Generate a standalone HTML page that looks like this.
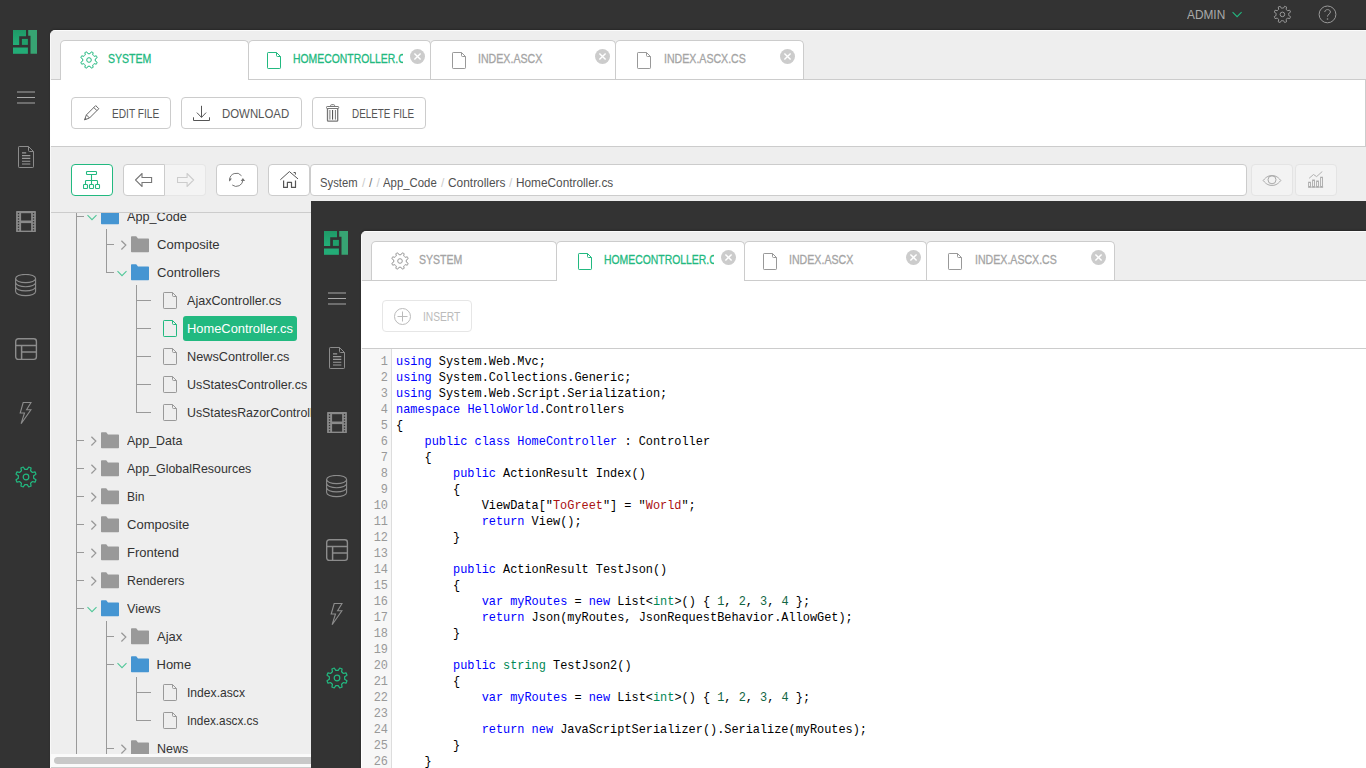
<!DOCTYPE html>
<html lang="en"><head><meta charset="utf-8"><title>CMS Console</title>
<style>
html,body{margin:0;padding:0}
body{width:1366px;height:768px;overflow:hidden;background:#333;position:relative;font-family:"Liberation Sans",sans-serif}
.app{position:absolute;overflow:hidden;background:#333}
.a{position:absolute;display:block}
.t{position:absolute;display:block;white-space:nowrap;transform-origin:0 50%}
.z3{z-index:3}
.tb{-webkit-text-stroke:.3px}
.dark{background:#333}
.btn{background:#fff;border:1px solid #ccc;border-radius:4px;box-sizing:border-box}
pre{margin:0}
.code,.ln{font-family:"Liberation Mono",monospace;font-size:11.9px;line-height:16px;color:#000;white-space:pre}
.ln{text-align:right;color:#999}
.ck{color:#00f}.cd{color:#00f}.cv{color:#000}.cs{color:#a11}.cy{color:#085}.cn{color:#164}
</style></head>
<body>
<div class="app" style="left:0;top:0;width:1366px;height:768px">
<div class="a dark" style="left:0px;top:0px;width:1366px;height:30px;"></div>
<div class="a dark" style="left:0px;top:30px;width:50px;height:800px;"></div>
<svg class="a" style="left:13px;top:30px" width="24" height="24" viewBox="0 0 24 24">
<defs><linearGradient id="lg1" x1="0" y1="0" x2="0" y2="1"><stop offset="0" stop-color="#1f9a67"/><stop offset="1" stop-color="#23ae78"/></linearGradient></defs>
<path d="M0 0H13V6.2H6.2V14.9H0Z" fill="url(#lg1)"/>
<rect x="8.9" y="8.9" width="6" height="6" fill="#209f6b"/>
<rect x="0" y="17.5" width="14.9" height="6.3" fill="#23ac77"/>
<path d="M15.2 0H24V23.8H17.5V5.8H15.2Z" fill="#37a473"/>
</svg>
<svg class="a" style="left:17px;top:91px" width="18" height="14" viewBox="0 0 18 14"><path d="M0 1H18M0 6.5H18M0 12H18" stroke="#a8a8a8" stroke-width="1" fill="none"/></svg>
<svg class="a" style="left:17px;top:145px" width="18" height="24" viewBox="0 0 18 24"><path d="M2.20 1.50H11.50L16.50 6.50V21.80Q16.50 22.50 15.80 22.50H2.20Q1.50 22.50 1.50 21.80V2.20Q1.50 1.50 2.20 1.50ZM11.50 1.50V5.50Q11.50 6.50 12.50 6.50H16.50" fill="none" stroke="#8c8c8c" stroke-width="1.0" stroke-linejoin="round"/></svg><svg class="a" style="left:22px;top:152px" width="9" height="13" viewBox="0 0 9 13"><path d="M0 .9H4.2M0 3.6H8.3M0 6.4H8.3M0 9.2H8.3M0 12H8.3" stroke="#9a9a9a" stroke-width="1.1"/></svg>
<svg class="a" style="left:16px;top:211px" width="20" height="21" viewBox="0 0 20 21"><rect x=".1" y="0" width="19.8" height="21" rx=".6" fill="#8a8a8a"/><g fill="#333"><rect x="5.1" y="2.2" width="10" height="7.3"/><rect x="5.1" y="12.1" width="10" height="7.5"/><rect x="1.85" y="1.90" width="1.3" height="1.3"/><rect x="16.85" y="1.90" width="1.3" height="1.3"/><rect x="1.85" y="4.63" width="1.3" height="1.3"/><rect x="16.85" y="4.63" width="1.3" height="1.3"/><rect x="1.85" y="7.36" width="1.3" height="1.3"/><rect x="16.85" y="7.36" width="1.3" height="1.3"/><rect x="1.85" y="10.09" width="1.3" height="1.3"/><rect x="16.85" y="10.09" width="1.3" height="1.3"/><rect x="1.85" y="12.82" width="1.3" height="1.3"/><rect x="16.85" y="12.82" width="1.3" height="1.3"/><rect x="1.85" y="15.55" width="1.3" height="1.3"/><rect x="16.85" y="15.55" width="1.3" height="1.3"/><rect x="1.85" y="18.28" width="1.3" height="1.3"/><rect x="16.85" y="18.28" width="1.3" height="1.3"/></g></svg>
<svg class="a" style="left:15px;top:274px" width="22" height="23" viewBox="0 0 22 23"><g fill="none" stroke="#8c8c8c" stroke-width="1.1"><ellipse cx="10.6" cy="4.5" rx="10" ry="4.1"/><path d="M.6 4.5V17.5C.6 19.8 5.1 21.6 10.6 21.6S20.6 19.8 20.6 17.5V4.5"/><path d="M.6 8.6C.6 10.9 5.1 12.7 10.6 12.7S20.6 10.9 20.6 8.6"/><path d="M.6 12.8C.6 15.1 5.1 16.9 10.6 16.9S20.6 15.1 20.6 12.8"/></g></svg>
<svg class="a" style="left:15px;top:338px" width="23" height="23" viewBox="0 0 23 23"><rect x=".7" y=".8" width="20.7" height="20.6" rx="2.6" fill="none" stroke="#8c8c8c" stroke-width="1.4"/><path d="M.7 7.6H21.4M6.6 7.6V21.4M6.6 13.9H21.4" fill="none" stroke="#8c8c8c" stroke-width="1.5"/></svg>
<svg class="a" style="left:19px;top:402px" width="14" height="23" viewBox="0 0 14 23"><path d="M4.2 .5H12L7.6 7.7H11.9L2.1 21.7L5.5 11H1.2Z" fill="none" stroke="#8c8c8c" stroke-width="1.1" stroke-linejoin="miter"/></svg>
<svg class="a" style="left:15px;top:466px" width="22" height="22" viewBox="0 0 22 22"><path d="M12.21 3.38L13.77 1.03A10.35 10.35 0 0 1 16.10 1.99L15.53 4.76A7.71 7.71 0 0 1 17.24 6.47L20.01 5.90A10.35 10.35 0 0 1 20.97 8.23L18.62 9.79A7.71 7.71 0 0 1 18.62 12.21L20.97 13.77A10.35 10.35 0 0 1 20.01 16.10L17.24 15.53A7.71 7.71 0 0 1 15.53 17.24L16.10 20.01A10.35 10.35 0 0 1 13.77 20.97L12.21 18.62A7.71 7.71 0 0 1 9.79 18.62L8.23 20.97A10.35 10.35 0 0 1 5.90 20.01L6.47 17.24A7.71 7.71 0 0 1 4.76 15.53L1.99 16.10A10.35 10.35 0 0 1 1.03 13.77L3.38 12.21A7.71 7.71 0 0 1 3.38 9.79L1.03 8.23A10.35 10.35 0 0 1 1.99 5.90L4.76 6.47A7.71 7.71 0 0 1 6.47 4.76L5.90 1.99A10.35 10.35 0 0 1 8.23 1.03L9.79 3.38A7.71 7.71 0 0 1 12.21 3.38Z" fill="none" stroke="#22b980" stroke-width="1.2" stroke-linejoin="round"/><circle cx="11.0" cy="11.0" r="2.82" fill="none" stroke="#22b980" stroke-width="1.2"/></svg>
<div class="a " style="left:50px;top:30px;width:1400px;height:800px;background:#eee;border-top-left-radius:5px;border-top:1px solid #fbfbfb;border-left:1px solid #f8f8f8;box-shadow:0 -1px 2px rgba(0,0,0,.22)"></div>
<div class="a " style="left:51px;top:79px;width:1400px;height:1px;background:#ccc"></div>
<div class="a " style="left:50px;top:80px;width:1400px;height:66px;background:#fff"></div>
<div class="a " style="left:51px;top:146px;width:1400px;height:1px;background:#ccc"></div>
<div class="a " style="left:1365px;top:79px;width:1px;height:67px;background:#ccc"></div>
<div class="a " style="left:60px;top:40px;width:189px;height:40px;background:#fff;border:1px solid #ccc;border-radius:5px 5px 0 0;box-sizing:border-box;border-bottom:none;z-index:2;"></div>
<div class="a " style="left:248px;top:40px;width:183px;height:39px;background:#fff;border:1px solid #ccc;border-radius:5px 5px 0 0;box-sizing:border-box;border-bottom:none;"></div>
<div class="a " style="left:430px;top:40px;width:186px;height:39px;background:#fff;border:1px solid #ccc;border-radius:5px 5px 0 0;box-sizing:border-box;border-bottom:none;"></div>
<div class="a " style="left:615px;top:40px;width:189px;height:39px;background:#fff;border:1px solid #ccc;border-radius:5px 5px 0 0;box-sizing:border-box;border-bottom:none;"></div>
<svg class="a z3" style="left:80px;top:51px" width="18" height="18" viewBox="0 0 18 18"><path d="M9.98 2.78L11.26 0.86A8.45 8.45 0 0 1 13.16 1.65L12.70 3.91A6.30 6.30 0 0 1 14.09 5.30L16.35 4.84A8.45 8.45 0 0 1 17.14 6.74L15.22 8.02A6.30 6.30 0 0 1 15.22 9.98L17.14 11.26A8.45 8.45 0 0 1 16.35 13.16L14.09 12.70A6.30 6.30 0 0 1 12.70 14.09L13.16 16.35A8.45 8.45 0 0 1 11.26 17.14L9.98 15.22A6.30 6.30 0 0 1 8.02 15.22L6.74 17.14A8.45 8.45 0 0 1 4.84 16.35L5.30 14.09A6.30 6.30 0 0 1 3.91 12.70L1.65 13.16A8.45 8.45 0 0 1 0.86 11.26L2.78 9.98A6.30 6.30 0 0 1 2.78 8.02L0.86 6.74A8.45 8.45 0 0 1 1.65 4.84L3.91 5.30A6.30 6.30 0 0 1 5.30 3.91L4.84 1.65A8.45 8.45 0 0 1 6.74 0.86L8.02 2.78A6.30 6.30 0 0 1 9.98 2.78Z" fill="none" stroke="#22b980" stroke-width="1.0" stroke-linejoin="round"/><circle cx="9.0" cy="9.0" r="2.30" fill="none" stroke="#22b980" stroke-width="1.0"/></svg>
<span id="t1" class="t z3 tb" style="left:108.4px;top:50.50px;font-size:13px;line-height:16px;color:#22b980;transform:scaleX(0.8094);">SYSTEM</span>
<svg class="a z3" style="left:266px;top:51px" width="16" height="19" viewBox="0 0 16 19"><path d="M2.20 1.50H10.50L14.50 5.50V16.80Q14.50 17.50 13.80 17.50H2.20Q1.50 17.50 1.50 16.80V2.20Q1.50 1.50 2.20 1.50ZM10.50 1.50V4.50Q10.50 5.50 11.50 5.50H14.50" fill="none" stroke="#22b980" stroke-width="1.0" stroke-linejoin="round"/></svg>
<div class="a z3" style="left:293px;top:45px;width:110px;height:28px;overflow:hidden"><span id="t2" class="t tb" style="left:0px;top:5.50px;font-size:13px;line-height:16px;color:#22b980;transform:scaleX(0.80);">HOMECONTROLLER.CS</span></div>
<svg class="a z3" style="left:410.0px;top:49.0px" width="15" height="15" viewBox="0 0 15 15"><circle cx="7.5" cy="7.5" r="7.5" fill="#ccc"/><path d="M4.4 4.4L10.6 10.6M10.6 4.4L4.4 10.6" stroke="#fff" stroke-width="1.45"/></svg>
<svg class="a z3" style="left:451px;top:51px" width="16" height="19" viewBox="0 0 16 19"><path d="M2.20 1.50H10.50L14.50 5.50V16.80Q14.50 17.50 13.80 17.50H2.20Q1.50 17.50 1.50 16.80V2.20Q1.50 1.50 2.20 1.50ZM10.50 1.50V4.50Q10.50 5.50 11.50 5.50H14.50" fill="none" stroke="#999" stroke-width="1.0" stroke-linejoin="round"/></svg>
<span id="t3" class="t z3 tb" style="left:478px;top:50.50px;font-size:13px;line-height:16px;color:#a4a4a4;transform:scaleX(0.8165);">INDEX.ASCX</span>
<svg class="a z3" style="left:595.0px;top:49.0px" width="15" height="15" viewBox="0 0 15 15"><circle cx="7.5" cy="7.5" r="7.5" fill="#ccc"/><path d="M4.4 4.4L10.6 10.6M10.6 4.4L4.4 10.6" stroke="#fff" stroke-width="1.45"/></svg>
<svg class="a z3" style="left:636px;top:51px" width="16" height="19" viewBox="0 0 16 19"><path d="M2.20 1.50H10.50L14.50 5.50V16.80Q14.50 17.50 13.80 17.50H2.20Q1.50 17.50 1.50 16.80V2.20Q1.50 1.50 2.20 1.50ZM10.50 1.50V4.50Q10.50 5.50 11.50 5.50H14.50" fill="none" stroke="#999" stroke-width="1.0" stroke-linejoin="round"/></svg>
<span id="t4" class="t z3 tb" style="left:663.5px;top:50.50px;font-size:13px;line-height:16px;color:#a4a4a4;transform:scaleX(0.8150);">INDEX.ASCX.CS</span>
<svg class="a z3" style="left:780.0px;top:49.0px" width="15" height="15" viewBox="0 0 15 15"><circle cx="7.5" cy="7.5" r="7.5" fill="#ccc"/><path d="M4.4 4.4L10.6 10.6M10.6 4.4L4.4 10.6" stroke="#fff" stroke-width="1.45"/></svg>
<span id="t5" class="t " style="left:1187.2px;top:6.50px;font-size:13px;line-height:16px;color:#aaa;transform:scaleX(0.9119);">ADMIN</span>
<svg class="a" style="left:1232px;top:11px" width="11" height="7" viewBox="0 0 11 7"><g transform="translate(0.1 0.8)"><path d="M.5 .4L5 4.9L9.5 .4" fill="none" stroke="#22b980" stroke-width="1.05"/></g></svg>
<svg class="a" style="left:1273px;top:5px" width="19" height="19" viewBox="0 0 19 19"><g transform="translate(0.4 0.4)"><path d="M9.98 2.78L11.26 0.86A8.45 8.45 0 0 1 13.16 1.65L12.70 3.91A6.30 6.30 0 0 1 14.09 5.30L16.35 4.84A8.45 8.45 0 0 1 17.14 6.74L15.22 8.02A6.30 6.30 0 0 1 15.22 9.98L17.14 11.26A8.45 8.45 0 0 1 16.35 13.16L14.09 12.70A6.30 6.30 0 0 1 12.70 14.09L13.16 16.35A8.45 8.45 0 0 1 11.26 17.14L9.98 15.22A6.30 6.30 0 0 1 8.02 15.22L6.74 17.14A8.45 8.45 0 0 1 4.84 16.35L5.30 14.09A6.30 6.30 0 0 1 3.91 12.70L1.65 13.16A8.45 8.45 0 0 1 0.86 11.26L2.78 9.98A6.30 6.30 0 0 1 2.78 8.02L0.86 6.74A8.45 8.45 0 0 1 1.65 4.84L3.91 5.30A6.30 6.30 0 0 1 5.30 3.91L4.84 1.65A8.45 8.45 0 0 1 6.74 0.86L8.02 2.78A6.30 6.30 0 0 1 9.98 2.78Z" fill="none" stroke="#999" stroke-width="1.0" stroke-linejoin="round"/><circle cx="9.0" cy="9.0" r="2.30" fill="none" stroke="#999" stroke-width="1.0"/></g></svg>
<svg class="a" style="left:1318px;top:5px" width="19" height="19" viewBox="0 0 19 19"><g transform="translate(0.5 0.4)"><circle cx="9" cy="9" r="8.4" fill="none" stroke="#999" stroke-width="1"/><path d="M6.3 6.6C6.3 3.4 11.9 3.4 11.9 6.6C11.9 8.8 9 8.6 9 11.2" fill="none" stroke="#999" stroke-width="1"/><circle cx="9" cy="13.6" r=".8" fill="#999"/></g></svg>
<div class="a btn" style="left:71px;top:97px;width:100px;height:32px;"></div>
<svg class="a" style="left:84px;top:105px" width="16" height="16" viewBox="0 0 16 16"><path d="M11.7 .6L14.8 3.7L5.5 13L.5 14.9L2.4 9.9ZM9.8 2.5L12.9 5.6M2.4 9.9L5.5 13" fill="none" stroke="#666" stroke-width="1" stroke-linejoin="round"/><path d="M.5 14.9L1.3 12.8L2.6 14.1Z" fill="#666"/></svg>
<span id="t6" class="t " style="left:111.6px;top:107.34px;font-size:12px;line-height:15px;color:#555;transform:scaleX(0.8464);">EDIT FILE</span>
<div class="a btn" style="left:181px;top:97px;width:121px;height:32px;"></div>
<svg class="a" style="left:193px;top:105px" width="17" height="16" viewBox="0 0 17 16"><path d="M8.5 .8V12.3M3.9 7.6L8.5 12.4L13.1 7.6M.5 12.3V15.5H16.5V12.3" fill="none" stroke="#555" stroke-width="1"/></svg>
<span id="t7" class="t " style="left:221.75px;top:107.34px;font-size:12px;line-height:15px;color:#555;transform:scaleX(0.9507);">DOWNLOAD</span>
<div class="a btn" style="left:312px;top:97px;width:114px;height:32px;"></div>
<svg class="a" style="left:326px;top:104px" width="14" height="18" viewBox="0 0 14 18"><path d="M4.6 2.4V1.6A.9 .9 0 0 1 5.5 .7H7.7A.9 .9 0 0 1 8.6 1.6V2.4" fill="none" stroke="#777" stroke-width="1"/><rect x=".5" y="2.5" width="12.2" height="2" rx=".7" fill="none" stroke="#777" stroke-width="1"/><path d="M1.5 4.6V16.4A.8 .8 0 0 0 2.3 17.2H10.9A.8 .8 0 0 0 11.7 16.4V4.6" fill="none" stroke="#777" stroke-width="1.3"/><path d="M3.9 6V15.6M9.4 6V15.6" stroke="#777" stroke-width="1"/><path d="M6.6 6V15.6" stroke="#444" stroke-width="1"/></svg>
<span id="t8" class="t " style="left:352px;top:107.34px;font-size:12px;line-height:15px;color:#555;transform:scaleX(0.8233);">DELETE FILE</span>
<div class="a btn" style="left:71px;top:164px;width:42px;height:32px;border-color:#22b980;"></div>
<svg class="a" style="left:83px;top:171px" width="18" height="19" viewBox="0 0 18 19"><g fill="none" stroke="#22b980" stroke-width="1.1"><rect x="3.5" y=".5" width="10" height="3" rx=".8"/><path d="M8.5 3.5V13.5M2.5 13.5V10.3A.8 .8 0 0 1 3.3 9.5H13.7A.8 .8 0 0 1 14.5 10.3V13.5"/><rect x=".5" y="13.5" width="4" height="4" rx=".8"/><rect x="6.5" y="13.5" width="4" height="4" rx=".8"/><rect x="12.5" y="13.5" width="4" height="4" rx=".8"/></g></svg>
<div class="a btn" style="left:123px;top:164px;width:42px;height:32px;border-radius:4px 0 0 4px;"></div>
<div class="a btn" style="left:165px;top:164px;width:41px;height:32px;border-radius:0 4px 4px 0;background:#f4f4f4;border-color:#e6e6e6;border-left:none;"></div>
<svg class="a" style="left:135px;top:173px" width="18" height="14" viewBox="0 0 18 14"><path d="M.5 7L7 .5V4.5H16.6V9.5H7V13.5Z" fill="none" stroke="#777" stroke-width="1.1" stroke-linejoin="miter"/></svg>
<svg class="a" style="left:177px;top:173px" width="18" height="14" viewBox="0 0 18 14"><path transform="translate(17.1 0) scale(-1 1)" d="M.5 7L7 .5V4.5H16.6V9.5H7V13.5Z" fill="none" stroke="#ccc" stroke-width="1.1" stroke-linejoin="miter"/></svg>
<div class="a btn" style="left:216px;top:164px;width:42px;height:32px;"></div>
<svg class="a" style="left:229px;top:172px" width="17" height="16" viewBox="0 0 17 16"><g transform="translate(0 0.5)"><path d="M0.70 7.30A6.6 6.6 0 0 1 12.50 3.24M13.90 7.30A6.6 6.6 0 0 1 3.24 12.50" fill="none" stroke="#777" stroke-width="1"/><path d="M-1.50 6.10L0.70 9.10L2.90 6.10ZM11.70 8.50L13.90 5.50L16.10 8.50Z" fill="#777"/></g></svg>
<div class="a btn" style="left:268px;top:164px;width:42px;height:32px;"></div>
<svg class="a" style="left:280px;top:171px" width="19" height="17" viewBox="0 0 19 17"><path d="M.3 8.8L9.4 .6L18 7.9" fill="none" stroke="#555" stroke-width="1"/><path d="M3.6 9.5V16.4H7.4V11.4H11.5V16.4H15.5V9.5" fill="none" stroke="#555" stroke-width="1.2" stroke-linejoin="round"/><path d="M13.6 1.5H15.4V3.6" fill="none" stroke="#555" stroke-width="1"/></svg>
<div class="a btn" style="left:310px;top:164px;width:937px;height:32px;"></div>
<span id="t9" class="t " style="left:320px;top:176.34px;font-size:12px;line-height:15px;color:#505050;transform:scaleX(0.9375);">System</span>
<span id="t10" class="t " style="left:362px;top:176.34px;font-size:12px;line-height:15px;color:#ccc;">/</span>
<span id="t11" class="t " style="left:369px;top:176.34px;font-size:12px;line-height:15px;color:#777;">/</span>
<span id="t12" class="t " style="left:376.5px;top:176.34px;font-size:12px;line-height:15px;color:#ccc;">/</span>
<span id="t13" class="t " style="left:383px;top:176.34px;font-size:12px;line-height:15px;color:#505050;transform:scaleX(0.9474);">App_Code</span>
<span id="t14" class="t " style="left:441px;top:176.34px;font-size:12px;line-height:15px;color:#ccc;">/</span>
<span id="t15" class="t " style="left:447.5px;top:176.34px;font-size:12px;line-height:15px;color:#505050;transform:scaleX(0.9914);">Controllers</span>
<span id="t16" class="t " style="left:509px;top:176.34px;font-size:12px;line-height:15px;color:#ccc;">/</span>
<span id="t17" class="t " style="left:515.5px;top:176.34px;font-size:12px;line-height:15px;color:#505050;transform:scaleX(0.9848);">HomeController.cs</span>
<div class="a btn" style="left:1251px;top:164px;width:42px;height:32px;background:#f3f3f3;border-color:#e4e4e4;"></div>
<svg class="a" style="left:1262px;top:175px" width="20" height="11" viewBox="0 0 20 11"><g transform="translate(0.5 0)"><path d="M.7 5.5C4 1.2 7 .6 9.5 .6S15 1.2 18.3 5.5C15 9.8 12 10.4 9.5 10.4S4 9.8 .7 5.5Z" fill="none" stroke="#aaa" stroke-width="1"/><circle cx="9.5" cy="4.8" r="4" fill="none" stroke="#aaa" stroke-width="1"/></g></svg>
<div class="a btn" style="left:1295px;top:164px;width:42px;height:32px;background:#f3f3f3;border-color:#e4e4e4;"></div>
<svg class="a" style="left:1308px;top:171px" width="16" height="17" viewBox="0 0 16 17"><g fill="none" stroke="#aaa" stroke-width=".9"><path d="M.2 16.1H15.2"/><rect x=".6" y="11.2" width="1.9" height="4.9"/><rect x="4.6" y="9.0" width="1.9" height="7.1"/><rect x="8.6" y="10.0" width="1.9" height="6.1"/><rect x="12.6" y="6.2" width="1.9" height="9.9"/><path d="M1.1 7.3L5.5 3.5L8.6 5.6L14.3 .5"/></g></svg>
<div class="a " style="left:51px;top:212px;width:260px;height:1px;background:#ccc"></div>
<div class="a" style="left:50px;top:213px;width:261px;height:541px;overflow:hidden">
<div class="a " style="left:26px;top:-13px;width:1px;height:568px;background:#999"></div>
<div class="a " style="left:56px;top:16px;width:1px;height:44px;background:#999"></div>
<div class="a " style="left:86px;top:72px;width:1px;height:128px;background:#999"></div>
<div class="a " style="left:56px;top:408px;width:1px;height:147px;background:#999"></div>
<div class="a " style="left:86px;top:464px;width:1px;height:44px;background:#999"></div>
<div class="a " style="left:26px;top:3px;width:8px;height:1px;background:#999"></div>
<svg class="a" style="left:37px;top:1px" width="10" height="7" viewBox="0 0 10 7"><g transform="translate(0 0.8)"><path d="M.5 .4L5 4.9L9.5 .4" fill="none" stroke="#4fc797" stroke-width="1.05"/></g></svg>
<svg class="a" style="left:51px;top:-5px" width="18" height="17" viewBox="0 0 18 17"><g transform="translate(0 0.2)"><path d="M0 .9A.8 .8 0 0 1 .8 .1H5.2L7 2.4H17.3A.7 .7 0 0 1 18 3.1V15.4A.7 .7 0 0 1 17.3 16.1H.7A.7 .7 0 0 1 0 15.4Z" fill="#4595d2"/></g></svg>
<span id="t18" class="t " style="left:76.7px;top:-4.50px;font-size:13px;line-height:16px;color:#333;transform:scaleX(0.9738);">App_Code</span>
<div class="a " style="left:56px;top:31px;width:8px;height:1px;background:#999"></div>
<svg class="a" style="left:70px;top:27px" width="7" height="11" viewBox="0 0 7 11"><g transform="translate(0.8 0.2)"><path d="M.6 .5L5 4.9L.6 9.3" fill="none" stroke="#999" stroke-width="1.3"/></g></svg>
<svg class="a" style="left:81px;top:23px" width="18" height="17" viewBox="0 0 18 17"><g transform="translate(0 0.2)"><path d="M0 .9A.8 .8 0 0 1 .8 .1H5.2L7 2.4H17.3A.7 .7 0 0 1 18 3.1V15.4A.7 .7 0 0 1 17.3 16.1H.7A.7 .7 0 0 1 0 15.4Z" fill="#999"/></g></svg>
<span id="t19" class="t " style="left:106.5px;top:23.50px;font-size:13px;line-height:16px;color:#333;transform:scaleX(1.0065);">Composite</span>
<div class="a " style="left:56px;top:59px;width:8px;height:1px;background:#999"></div>
<svg class="a" style="left:67px;top:57px" width="10" height="7" viewBox="0 0 10 7"><g transform="translate(0 0.8)"><path d="M.5 .4L5 4.9L9.5 .4" fill="none" stroke="#4fc797" stroke-width="1.05"/></g></svg>
<svg class="a" style="left:81px;top:51px" width="18" height="17" viewBox="0 0 18 17"><g transform="translate(0 0.2)"><path d="M0 .9A.8 .8 0 0 1 .8 .1H5.2L7 2.4H17.3A.7 .7 0 0 1 18 3.1V15.4A.7 .7 0 0 1 17.3 16.1H.7A.7 .7 0 0 1 0 15.4Z" fill="#4595d2"/></g></svg>
<span id="t20" class="t " style="left:106.5px;top:51.50px;font-size:13px;line-height:16px;color:#333;transform:scaleX(1.0032);">Controllers</span>
<div class="a " style="left:86px;top:87px;width:15px;height:1px;background:#999"></div>
<svg class="a" style="left:112px;top:78px" width="16" height="19" viewBox="0 0 16 19"><path d="M2.20 1.50H10.50L14.50 5.50V16.80Q14.50 17.50 13.80 17.50H2.20Q1.50 17.50 1.50 16.80V2.20Q1.50 1.50 2.20 1.50ZM10.50 1.50V4.50Q10.50 5.50 11.50 5.50H14.50" fill="none" stroke="#999" stroke-width="1.0" stroke-linejoin="round"/></svg>
<span id="t21" class="t " style="left:137.2px;top:79.50px;font-size:13px;line-height:16px;color:#333;transform:scaleX(0.9673);">AjaxController.cs</span>
<div class="a " style="left:86px;top:115px;width:15px;height:1px;background:#999"></div>
<div class="a " style="left:133px;top:103px;width:114px;height:25px;background:#22b980;border-radius:3px"></div>
<svg class="a" style="left:112px;top:106px" width="16" height="19" viewBox="0 0 16 19"><path d="M2.20 1.50H10.50L14.50 5.50V16.80Q14.50 17.50 13.80 17.50H2.20Q1.50 17.50 1.50 16.80V2.20Q1.50 1.50 2.20 1.50ZM10.50 1.50V4.50Q10.50 5.50 11.50 5.50H14.50" fill="none" stroke="#22b980" stroke-width="1.0" stroke-linejoin="round"/></svg>
<span id="t22" class="t " style="left:137.2px;top:107.50px;font-size:13px;line-height:16px;color:#fff;transform:scaleX(0.9907);">HomeController.cs</span>
<div class="a " style="left:86px;top:143px;width:15px;height:1px;background:#999"></div>
<svg class="a" style="left:112px;top:134px" width="16" height="19" viewBox="0 0 16 19"><path d="M2.20 1.50H10.50L14.50 5.50V16.80Q14.50 17.50 13.80 17.50H2.20Q1.50 17.50 1.50 16.80V2.20Q1.50 1.50 2.20 1.50ZM10.50 1.50V4.50Q10.50 5.50 11.50 5.50H14.50" fill="none" stroke="#999" stroke-width="1.0" stroke-linejoin="round"/></svg>
<span id="t23" class="t " style="left:137.2px;top:135.50px;font-size:13px;line-height:16px;color:#333;transform:scaleX(0.9781);">NewsController.cs</span>
<div class="a " style="left:86px;top:171px;width:15px;height:1px;background:#999"></div>
<svg class="a" style="left:112px;top:162px" width="16" height="19" viewBox="0 0 16 19"><path d="M2.20 1.50H10.50L14.50 5.50V16.80Q14.50 17.50 13.80 17.50H2.20Q1.50 17.50 1.50 16.80V2.20Q1.50 1.50 2.20 1.50ZM10.50 1.50V4.50Q10.50 5.50 11.50 5.50H14.50" fill="none" stroke="#999" stroke-width="1.0" stroke-linejoin="round"/></svg>
<span id="t24" class="t " style="left:137.2px;top:163.50px;font-size:13px;line-height:16px;color:#333;transform:scaleX(0.9616);">UsStatesController.cs</span>
<div class="a " style="left:86px;top:199px;width:15px;height:1px;background:#999"></div>
<svg class="a" style="left:112px;top:190px" width="16" height="19" viewBox="0 0 16 19"><path d="M2.20 1.50H10.50L14.50 5.50V16.80Q14.50 17.50 13.80 17.50H2.20Q1.50 17.50 1.50 16.80V2.20Q1.50 1.50 2.20 1.50ZM10.50 1.50V4.50Q10.50 5.50 11.50 5.50H14.50" fill="none" stroke="#999" stroke-width="1.0" stroke-linejoin="round"/></svg>
<span id="t25" class="t " style="left:137.2px;top:191.50px;font-size:13px;line-height:16px;color:#333;transform:scaleX(0.9512);">UsStatesRazorController.cs</span>
<div class="a " style="left:26px;top:227px;width:8px;height:1px;background:#999"></div>
<svg class="a" style="left:40px;top:223px" width="7" height="11" viewBox="0 0 7 11"><g transform="translate(0.8 0.2)"><path d="M.6 .5L5 4.9L.6 9.3" fill="none" stroke="#999" stroke-width="1.3"/></g></svg>
<svg class="a" style="left:51px;top:219px" width="18" height="17" viewBox="0 0 18 17"><g transform="translate(0 0.2)"><path d="M0 .9A.8 .8 0 0 1 .8 .1H5.2L7 2.4H17.3A.7 .7 0 0 1 18 3.1V15.4A.7 .7 0 0 1 17.3 16.1H.7A.7 .7 0 0 1 0 15.4Z" fill="#999"/></g></svg>
<span id="t26" class="t " style="left:76.7px;top:219.50px;font-size:13px;line-height:16px;color:#333;transform:scaleX(0.9569);">App_Data</span>
<div class="a " style="left:26px;top:255px;width:8px;height:1px;background:#999"></div>
<svg class="a" style="left:40px;top:251px" width="7" height="11" viewBox="0 0 7 11"><g transform="translate(0.8 0.2)"><path d="M.6 .5L5 4.9L.6 9.3" fill="none" stroke="#999" stroke-width="1.3"/></g></svg>
<svg class="a" style="left:51px;top:247px" width="18" height="17" viewBox="0 0 18 17"><g transform="translate(0 0.2)"><path d="M0 .9A.8 .8 0 0 1 .8 .1H5.2L7 2.4H17.3A.7 .7 0 0 1 18 3.1V15.4A.7 .7 0 0 1 17.3 16.1H.7A.7 .7 0 0 1 0 15.4Z" fill="#999"/></g></svg>
<span id="t27" class="t " style="left:76.7px;top:247.50px;font-size:13px;line-height:16px;color:#333;transform:scaleX(0.9554);">App_GlobalResources</span>
<div class="a " style="left:26px;top:283px;width:8px;height:1px;background:#999"></div>
<svg class="a" style="left:40px;top:279px" width="7" height="11" viewBox="0 0 7 11"><g transform="translate(0.8 0.2)"><path d="M.6 .5L5 4.9L.6 9.3" fill="none" stroke="#999" stroke-width="1.3"/></g></svg>
<svg class="a" style="left:51px;top:275px" width="18" height="17" viewBox="0 0 18 17"><g transform="translate(0 0.2)"><path d="M0 .9A.8 .8 0 0 1 .8 .1H5.2L7 2.4H17.3A.7 .7 0 0 1 18 3.1V15.4A.7 .7 0 0 1 17.3 16.1H.7A.7 .7 0 0 1 0 15.4Z" fill="#999"/></g></svg>
<span id="t28" class="t " style="left:76.7px;top:275.50px;font-size:13px;line-height:16px;color:#333;transform:scaleX(0.9263);">Bin</span>
<div class="a " style="left:26px;top:311px;width:8px;height:1px;background:#999"></div>
<svg class="a" style="left:40px;top:307px" width="7" height="11" viewBox="0 0 7 11"><g transform="translate(0.8 0.2)"><path d="M.6 .5L5 4.9L.6 9.3" fill="none" stroke="#999" stroke-width="1.3"/></g></svg>
<svg class="a" style="left:51px;top:303px" width="18" height="17" viewBox="0 0 18 17"><g transform="translate(0 0.2)"><path d="M0 .9A.8 .8 0 0 1 .8 .1H5.2L7 2.4H17.3A.7 .7 0 0 1 18 3.1V15.4A.7 .7 0 0 1 17.3 16.1H.7A.7 .7 0 0 1 0 15.4Z" fill="#999"/></g></svg>
<span id="t29" class="t " style="left:76.7px;top:303.50px;font-size:13px;line-height:16px;color:#333;transform:scaleX(1.0032);">Composite</span>
<div class="a " style="left:26px;top:339px;width:8px;height:1px;background:#999"></div>
<svg class="a" style="left:40px;top:335px" width="7" height="11" viewBox="0 0 7 11"><g transform="translate(0.8 0.2)"><path d="M.6 .5L5 4.9L.6 9.3" fill="none" stroke="#999" stroke-width="1.3"/></g></svg>
<svg class="a" style="left:51px;top:331px" width="18" height="17" viewBox="0 0 18 17"><g transform="translate(0 0.2)"><path d="M0 .9A.8 .8 0 0 1 .8 .1H5.2L7 2.4H17.3A.7 .7 0 0 1 18 3.1V15.4A.7 .7 0 0 1 17.3 16.1H.7A.7 .7 0 0 1 0 15.4Z" fill="#999"/></g></svg>
<span id="t30" class="t " style="left:76.7px;top:331.50px;font-size:13px;line-height:16px;color:#333;transform:scaleX(0.9981);">Frontend</span>
<div class="a " style="left:26px;top:367px;width:8px;height:1px;background:#999"></div>
<svg class="a" style="left:40px;top:363px" width="7" height="11" viewBox="0 0 7 11"><g transform="translate(0.8 0.2)"><path d="M.6 .5L5 4.9L.6 9.3" fill="none" stroke="#999" stroke-width="1.3"/></g></svg>
<svg class="a" style="left:51px;top:359px" width="18" height="17" viewBox="0 0 18 17"><g transform="translate(0 0.2)"><path d="M0 .9A.8 .8 0 0 1 .8 .1H5.2L7 2.4H17.3A.7 .7 0 0 1 18 3.1V15.4A.7 .7 0 0 1 17.3 16.1H.7A.7 .7 0 0 1 0 15.4Z" fill="#999"/></g></svg>
<span id="t31" class="t " style="left:76.7px;top:359.50px;font-size:13px;line-height:16px;color:#333;transform:scaleX(0.9475);">Renderers</span>
<div class="a " style="left:26px;top:395px;width:8px;height:1px;background:#999"></div>
<svg class="a" style="left:37px;top:393px" width="10" height="7" viewBox="0 0 10 7"><g transform="translate(0 0.8)"><path d="M.5 .4L5 4.9L9.5 .4" fill="none" stroke="#4fc797" stroke-width="1.05"/></g></svg>
<svg class="a" style="left:51px;top:387px" width="18" height="17" viewBox="0 0 18 17"><g transform="translate(0 0.2)"><path d="M0 .9A.8 .8 0 0 1 .8 .1H5.2L7 2.4H17.3A.7 .7 0 0 1 18 3.1V15.4A.7 .7 0 0 1 17.3 16.1H.7A.7 .7 0 0 1 0 15.4Z" fill="#4595d2"/></g></svg>
<span id="t32" class="t " style="left:76.7px;top:387.50px;font-size:13px;line-height:16px;color:#333;transform:scaleX(0.9735);">Views</span>
<div class="a " style="left:56px;top:423px;width:8px;height:1px;background:#999"></div>
<svg class="a" style="left:70px;top:419px" width="7" height="11" viewBox="0 0 7 11"><g transform="translate(0.8 0.2)"><path d="M.6 .5L5 4.9L.6 9.3" fill="none" stroke="#999" stroke-width="1.3"/></g></svg>
<svg class="a" style="left:81px;top:415px" width="18" height="17" viewBox="0 0 18 17"><g transform="translate(0 0.2)"><path d="M0 .9A.8 .8 0 0 1 .8 .1H5.2L7 2.4H17.3A.7 .7 0 0 1 18 3.1V15.4A.7 .7 0 0 1 17.3 16.1H.7A.7 .7 0 0 1 0 15.4Z" fill="#999"/></g></svg>
<span id="t33" class="t " style="left:106.5px;top:415.50px;font-size:13px;line-height:16px;color:#333;transform:scaleX(0.9960);">Ajax</span>
<div class="a " style="left:56px;top:451px;width:8px;height:1px;background:#999"></div>
<svg class="a" style="left:67px;top:449px" width="10" height="7" viewBox="0 0 10 7"><g transform="translate(0 0.8)"><path d="M.5 .4L5 4.9L9.5 .4" fill="none" stroke="#4fc797" stroke-width="1.05"/></g></svg>
<svg class="a" style="left:81px;top:443px" width="18" height="17" viewBox="0 0 18 17"><g transform="translate(0 0.2)"><path d="M0 .9A.8 .8 0 0 1 .8 .1H5.2L7 2.4H17.3A.7 .7 0 0 1 18 3.1V15.4A.7 .7 0 0 1 17.3 16.1H.7A.7 .7 0 0 1 0 15.4Z" fill="#4595d2"/></g></svg>
<span id="t34" class="t " style="left:106.5px;top:443.50px;font-size:13px;line-height:16px;color:#333;">Home</span>
<div class="a " style="left:86px;top:479px;width:15px;height:1px;background:#999"></div>
<svg class="a" style="left:112px;top:470px" width="16" height="19" viewBox="0 0 16 19"><path d="M2.20 1.50H10.50L14.50 5.50V16.80Q14.50 17.50 13.80 17.50H2.20Q1.50 17.50 1.50 16.80V2.20Q1.50 1.50 2.20 1.50ZM10.50 1.50V4.50Q10.50 5.50 11.50 5.50H14.50" fill="none" stroke="#999" stroke-width="1.0" stroke-linejoin="round"/></svg>
<span id="t35" class="t " style="left:137.2px;top:471.50px;font-size:13px;line-height:16px;color:#333;transform:scaleX(0.9323);">Index.ascx</span>
<div class="a " style="left:86px;top:507px;width:15px;height:1px;background:#999"></div>
<svg class="a" style="left:112px;top:498px" width="16" height="19" viewBox="0 0 16 19"><path d="M2.20 1.50H10.50L14.50 5.50V16.80Q14.50 17.50 13.80 17.50H2.20Q1.50 17.50 1.50 16.80V2.20Q1.50 1.50 2.20 1.50ZM10.50 1.50V4.50Q10.50 5.50 11.50 5.50H14.50" fill="none" stroke="#999" stroke-width="1.0" stroke-linejoin="round"/></svg>
<span id="t36" class="t " style="left:137.2px;top:499.50px;font-size:13px;line-height:16px;color:#333;transform:scaleX(0.9063);">Index.ascx.cs</span>
<div class="a " style="left:56px;top:535px;width:8px;height:1px;background:#999"></div>
<svg class="a" style="left:70px;top:531px" width="7" height="11" viewBox="0 0 7 11"><g transform="translate(0.8 0.2)"><path d="M.6 .5L5 4.9L.6 9.3" fill="none" stroke="#999" stroke-width="1.3"/></g></svg>
<svg class="a" style="left:81px;top:527px" width="18" height="17" viewBox="0 0 18 17"><g transform="translate(0 0.2)"><path d="M0 .9A.8 .8 0 0 1 .8 .1H5.2L7 2.4H17.3A.7 .7 0 0 1 18 3.1V15.4A.7 .7 0 0 1 17.3 16.1H.7A.7 .7 0 0 1 0 15.4Z" fill="#999"/></g></svg>
<span id="t37" class="t " style="left:106.5px;top:527.50px;font-size:13px;line-height:16px;color:#333;transform:scaleX(0.9606);">News</span>
</div>
<div class="a " style="left:50px;top:754px;width:261px;height:14px;background:#fafafa;border-bottom:1px solid #ccc;box-sizing:border-box"></div>
<div class="a " style="left:54px;top:757px;width:300px;height:7px;background:#c8c8c8;border-radius:3.5px"></div>
<div class="a " style="left:50px;top:147px;width:1px;height:621px;background:#f8f8f8"></div>
</div>
<div class="app" style="left:311px;top:201px;width:1055px;height:567px">
<div class="a dark" style="left:0px;top:0px;width:1366px;height:30px;"></div>
<div class="a dark" style="left:0px;top:30px;width:50px;height:800px;"></div>
<svg class="a" style="left:13px;top:30px" width="24" height="24" viewBox="0 0 24 24">
<defs><linearGradient id="lg2" x1="0" y1="0" x2="0" y2="1"><stop offset="0" stop-color="#1f9a67"/><stop offset="1" stop-color="#23ae78"/></linearGradient></defs>
<path d="M0 0H13V6.2H6.2V14.9H0Z" fill="url(#lg2)"/>
<rect x="8.9" y="8.9" width="6" height="6" fill="#209f6b"/>
<rect x="0" y="17.5" width="14.9" height="6.3" fill="#23ac77"/>
<path d="M15.2 0H24V23.8H17.5V5.8H15.2Z" fill="#37a473"/>
</svg>
<svg class="a" style="left:17px;top:91px" width="18" height="14" viewBox="0 0 18 14"><path d="M0 1H18M0 6.5H18M0 12H18" stroke="#a8a8a8" stroke-width="1" fill="none"/></svg>
<svg class="a" style="left:17px;top:145px" width="18" height="24" viewBox="0 0 18 24"><path d="M2.20 1.50H11.50L16.50 6.50V21.80Q16.50 22.50 15.80 22.50H2.20Q1.50 22.50 1.50 21.80V2.20Q1.50 1.50 2.20 1.50ZM11.50 1.50V5.50Q11.50 6.50 12.50 6.50H16.50" fill="none" stroke="#8c8c8c" stroke-width="1.0" stroke-linejoin="round"/></svg><svg class="a" style="left:22px;top:152px" width="9" height="13" viewBox="0 0 9 13"><path d="M0 .9H4.2M0 3.6H8.3M0 6.4H8.3M0 9.2H8.3M0 12H8.3" stroke="#9a9a9a" stroke-width="1.1"/></svg>
<svg class="a" style="left:16px;top:211px" width="20" height="21" viewBox="0 0 20 21"><rect x=".1" y="0" width="19.8" height="21" rx=".6" fill="#8a8a8a"/><g fill="#333"><rect x="5.1" y="2.2" width="10" height="7.3"/><rect x="5.1" y="12.1" width="10" height="7.5"/><rect x="1.85" y="1.90" width="1.3" height="1.3"/><rect x="16.85" y="1.90" width="1.3" height="1.3"/><rect x="1.85" y="4.63" width="1.3" height="1.3"/><rect x="16.85" y="4.63" width="1.3" height="1.3"/><rect x="1.85" y="7.36" width="1.3" height="1.3"/><rect x="16.85" y="7.36" width="1.3" height="1.3"/><rect x="1.85" y="10.09" width="1.3" height="1.3"/><rect x="16.85" y="10.09" width="1.3" height="1.3"/><rect x="1.85" y="12.82" width="1.3" height="1.3"/><rect x="16.85" y="12.82" width="1.3" height="1.3"/><rect x="1.85" y="15.55" width="1.3" height="1.3"/><rect x="16.85" y="15.55" width="1.3" height="1.3"/><rect x="1.85" y="18.28" width="1.3" height="1.3"/><rect x="16.85" y="18.28" width="1.3" height="1.3"/></g></svg>
<svg class="a" style="left:15px;top:274px" width="22" height="23" viewBox="0 0 22 23"><g fill="none" stroke="#8c8c8c" stroke-width="1.1"><ellipse cx="10.6" cy="4.5" rx="10" ry="4.1"/><path d="M.6 4.5V17.5C.6 19.8 5.1 21.6 10.6 21.6S20.6 19.8 20.6 17.5V4.5"/><path d="M.6 8.6C.6 10.9 5.1 12.7 10.6 12.7S20.6 10.9 20.6 8.6"/><path d="M.6 12.8C.6 15.1 5.1 16.9 10.6 16.9S20.6 15.1 20.6 12.8"/></g></svg>
<svg class="a" style="left:15px;top:338px" width="23" height="23" viewBox="0 0 23 23"><rect x=".7" y=".8" width="20.7" height="20.6" rx="2.6" fill="none" stroke="#8c8c8c" stroke-width="1.4"/><path d="M.7 7.6H21.4M6.6 7.6V21.4M6.6 13.9H21.4" fill="none" stroke="#8c8c8c" stroke-width="1.5"/></svg>
<svg class="a" style="left:19px;top:402px" width="14" height="23" viewBox="0 0 14 23"><path d="M4.2 .5H12L7.6 7.7H11.9L2.1 21.7L5.5 11H1.2Z" fill="none" stroke="#8c8c8c" stroke-width="1.1" stroke-linejoin="miter"/></svg>
<svg class="a" style="left:15px;top:466px" width="22" height="22" viewBox="0 0 22 22"><path d="M12.21 3.38L13.77 1.03A10.35 10.35 0 0 1 16.10 1.99L15.53 4.76A7.71 7.71 0 0 1 17.24 6.47L20.01 5.90A10.35 10.35 0 0 1 20.97 8.23L18.62 9.79A7.71 7.71 0 0 1 18.62 12.21L20.97 13.77A10.35 10.35 0 0 1 20.01 16.10L17.24 15.53A7.71 7.71 0 0 1 15.53 17.24L16.10 20.01A10.35 10.35 0 0 1 13.77 20.97L12.21 18.62A7.71 7.71 0 0 1 9.79 18.62L8.23 20.97A10.35 10.35 0 0 1 5.90 20.01L6.47 17.24A7.71 7.71 0 0 1 4.76 15.53L1.99 16.10A10.35 10.35 0 0 1 1.03 13.77L3.38 12.21A7.71 7.71 0 0 1 3.38 9.79L1.03 8.23A10.35 10.35 0 0 1 1.99 5.90L4.76 6.47A7.71 7.71 0 0 1 6.47 4.76L5.90 1.99A10.35 10.35 0 0 1 8.23 1.03L9.79 3.38A7.71 7.71 0 0 1 12.21 3.38Z" fill="none" stroke="#22b980" stroke-width="1.2" stroke-linejoin="round"/><circle cx="11.0" cy="11.0" r="2.82" fill="none" stroke="#22b980" stroke-width="1.2"/></svg>
<div class="a " style="left:50px;top:30px;width:1400px;height:800px;background:#eee;border-top-left-radius:5px;border-top:1px solid #fbfbfb;border-left:1px solid #f8f8f8;box-shadow:0 -1px 2px rgba(0,0,0,.22)"></div>
<div class="a " style="left:51px;top:79px;width:1400px;height:1px;background:#ccc"></div>
<div class="a " style="left:50px;top:80px;width:1400px;height:67px;background:#fff"></div>
<div class="a " style="left:51px;top:147px;width:1400px;height:1px;background:#ccc"></div>
<div class="a " style="left:1365px;top:79px;width:1px;height:68px;background:#ccc"></div>
<div class="a " style="left:60px;top:40px;width:186px;height:39px;background:#fff;border:1px solid #ccc;border-radius:5px 5px 0 0;box-sizing:border-box;border-bottom:none;"></div>
<div class="a " style="left:245px;top:40px;width:189px;height:40px;background:#fff;border:1px solid #ccc;border-radius:5px 5px 0 0;box-sizing:border-box;border-bottom:none;z-index:2;"></div>
<div class="a " style="left:433px;top:40px;width:183px;height:39px;background:#fff;border:1px solid #ccc;border-radius:5px 5px 0 0;box-sizing:border-box;border-bottom:none;"></div>
<div class="a " style="left:615px;top:40px;width:189px;height:39px;background:#fff;border:1px solid #ccc;border-radius:5px 5px 0 0;box-sizing:border-box;border-bottom:none;"></div>
<svg class="a z3" style="left:80px;top:51px" width="18" height="18" viewBox="0 0 18 18"><path d="M9.98 2.78L11.26 0.86A8.45 8.45 0 0 1 13.16 1.65L12.70 3.91A6.30 6.30 0 0 1 14.09 5.30L16.35 4.84A8.45 8.45 0 0 1 17.14 6.74L15.22 8.02A6.30 6.30 0 0 1 15.22 9.98L17.14 11.26A8.45 8.45 0 0 1 16.35 13.16L14.09 12.70A6.30 6.30 0 0 1 12.70 14.09L13.16 16.35A8.45 8.45 0 0 1 11.26 17.14L9.98 15.22A6.30 6.30 0 0 1 8.02 15.22L6.74 17.14A8.45 8.45 0 0 1 4.84 16.35L5.30 14.09A6.30 6.30 0 0 1 3.91 12.70L1.65 13.16A8.45 8.45 0 0 1 0.86 11.26L2.78 9.98A6.30 6.30 0 0 1 2.78 8.02L0.86 6.74A8.45 8.45 0 0 1 1.65 4.84L3.91 5.30A6.30 6.30 0 0 1 5.30 3.91L4.84 1.65A8.45 8.45 0 0 1 6.74 0.86L8.02 2.78A6.30 6.30 0 0 1 9.98 2.78Z" fill="none" stroke="#999" stroke-width="1.0" stroke-linejoin="round"/><circle cx="9.0" cy="9.0" r="2.30" fill="none" stroke="#999" stroke-width="1.0"/></svg>
<span id="t38" class="t z3 tb" style="left:108.4px;top:50.50px;font-size:13px;line-height:16px;color:#a4a4a4;transform:scaleX(0.8094);">SYSTEM</span>
<svg class="a z3" style="left:266px;top:51px" width="16" height="19" viewBox="0 0 16 19"><path d="M2.20 1.50H10.50L14.50 5.50V16.80Q14.50 17.50 13.80 17.50H2.20Q1.50 17.50 1.50 16.80V2.20Q1.50 1.50 2.20 1.50ZM10.50 1.50V4.50Q10.50 5.50 11.50 5.50H14.50" fill="none" stroke="#22b980" stroke-width="1.0" stroke-linejoin="round"/></svg>
<div class="a z3" style="left:293px;top:45px;width:110px;height:28px;overflow:hidden"><span id="t39" class="t tb" style="left:0px;top:5.50px;font-size:13px;line-height:16px;color:#22b980;transform:scaleX(0.80);">HOMECONTROLLER.CS</span></div>
<svg class="a z3" style="left:410.0px;top:49.0px" width="15" height="15" viewBox="0 0 15 15"><circle cx="7.5" cy="7.5" r="7.5" fill="#ccc"/><path d="M4.4 4.4L10.6 10.6M10.6 4.4L4.4 10.6" stroke="#fff" stroke-width="1.45"/></svg>
<svg class="a z3" style="left:451px;top:51px" width="16" height="19" viewBox="0 0 16 19"><path d="M2.20 1.50H10.50L14.50 5.50V16.80Q14.50 17.50 13.80 17.50H2.20Q1.50 17.50 1.50 16.80V2.20Q1.50 1.50 2.20 1.50ZM10.50 1.50V4.50Q10.50 5.50 11.50 5.50H14.50" fill="none" stroke="#999" stroke-width="1.0" stroke-linejoin="round"/></svg>
<span id="t40" class="t z3 tb" style="left:478px;top:50.50px;font-size:13px;line-height:16px;color:#a4a4a4;transform:scaleX(0.8165);">INDEX.ASCX</span>
<svg class="a z3" style="left:595.0px;top:49.0px" width="15" height="15" viewBox="0 0 15 15"><circle cx="7.5" cy="7.5" r="7.5" fill="#ccc"/><path d="M4.4 4.4L10.6 10.6M10.6 4.4L4.4 10.6" stroke="#fff" stroke-width="1.45"/></svg>
<svg class="a z3" style="left:636px;top:51px" width="16" height="19" viewBox="0 0 16 19"><path d="M2.20 1.50H10.50L14.50 5.50V16.80Q14.50 17.50 13.80 17.50H2.20Q1.50 17.50 1.50 16.80V2.20Q1.50 1.50 2.20 1.50ZM10.50 1.50V4.50Q10.50 5.50 11.50 5.50H14.50" fill="none" stroke="#999" stroke-width="1.0" stroke-linejoin="round"/></svg>
<span id="t41" class="t z3 tb" style="left:663.5px;top:50.50px;font-size:13px;line-height:16px;color:#a4a4a4;transform:scaleX(0.8150);">INDEX.ASCX.CS</span>
<svg class="a z3" style="left:780.0px;top:49.0px" width="15" height="15" viewBox="0 0 15 15"><circle cx="7.5" cy="7.5" r="7.5" fill="#ccc"/><path d="M4.4 4.4L10.6 10.6M10.6 4.4L4.4 10.6" stroke="#fff" stroke-width="1.45"/></svg>
<div class="a btn" style="left:71px;top:99px;width:90px;height:32px;border-color:#e6e6e6;"></div>
<svg class="a" style="left:82px;top:106px" width="19" height="19" viewBox="0 0 19 19"><g transform="translate(0.5 0.5)"><circle cx="9" cy="9" r="8" fill="none" stroke="#bbb" stroke-width="1"/><path d="M9 4V14M4 9H14" stroke="#bbb" stroke-width="1"/></g></svg>
<span id="t42" class="t " style="left:111.5px;top:108.84px;font-size:12px;line-height:15px;color:#bbb;transform:scaleX(0.8523);">INSERT</span>
<div class="a " style="left:50px;top:148px;width:1400px;height:700px;background:#fff"></div>
<div class="a " style="left:51px;top:148px;width:29px;height:700px;background:#f7f7f7;border-right:1px solid #ddd"></div>
<pre class="a code" style="left:85px;top:153px"><span class="ck">using</span> System.Web.<span class="cv">Mvc</span>;
<span class="ck">using</span> System.Collections.<span class="cv">Generic</span>;
<span class="ck">using</span> System.Web.Script.<span class="cv">Serialization</span>;
<span class="ck">namespace</span> <span class="cd">HelloWorld</span>.Controllers
{
    <span class="ck">public</span> <span class="ck">class</span> <span class="cd">HomeController</span> : Controller
    {
        <span class="ck">public</span> ActionResult Index()
        {
            ViewData["<span class="cs">ToGreet</span>"] = "<span class="cs">World</span>";
            <span class="ck">return</span> View();
        }

        <span class="ck">public</span> ActionResult TestJson()
        {
            <span class="ck">var</span> <span class="cd">myRoutes</span> = <span class="ck">new</span> List&lt;<span class="cy">int</span>&gt;() { <span class="cn">1</span>, <span class="cn">2</span>, <span class="cn">3</span>, <span class="cn">4</span> };
            <span class="ck">return</span> Json(myRoutes, JsonRequestBehavior.AllowGet);
        }

        <span class="ck">public</span> <span class="cy">string</span> TestJson2()
        {
            <span class="ck">var</span> <span class="cd">myRoutes</span> = <span class="ck">new</span> List&lt;<span class="cy">int</span>&gt;() { <span class="cn">1</span>, <span class="cn">2</span>, <span class="cn">3</span>, <span class="cn">4</span> };

            <span class="ck">return</span> <span class="ck">new</span> JavaScriptSerializer().Serialize(myRoutes);
        }
    }</pre>
<pre class="a ln" style="left:51px;top:153px;width:26px">1
2
3
4
5
6
7
8
9
10
11
12
13
14
15
16
17
18
19
20
21
22
23
24
25
26</pre>
</div>
</body></html>
